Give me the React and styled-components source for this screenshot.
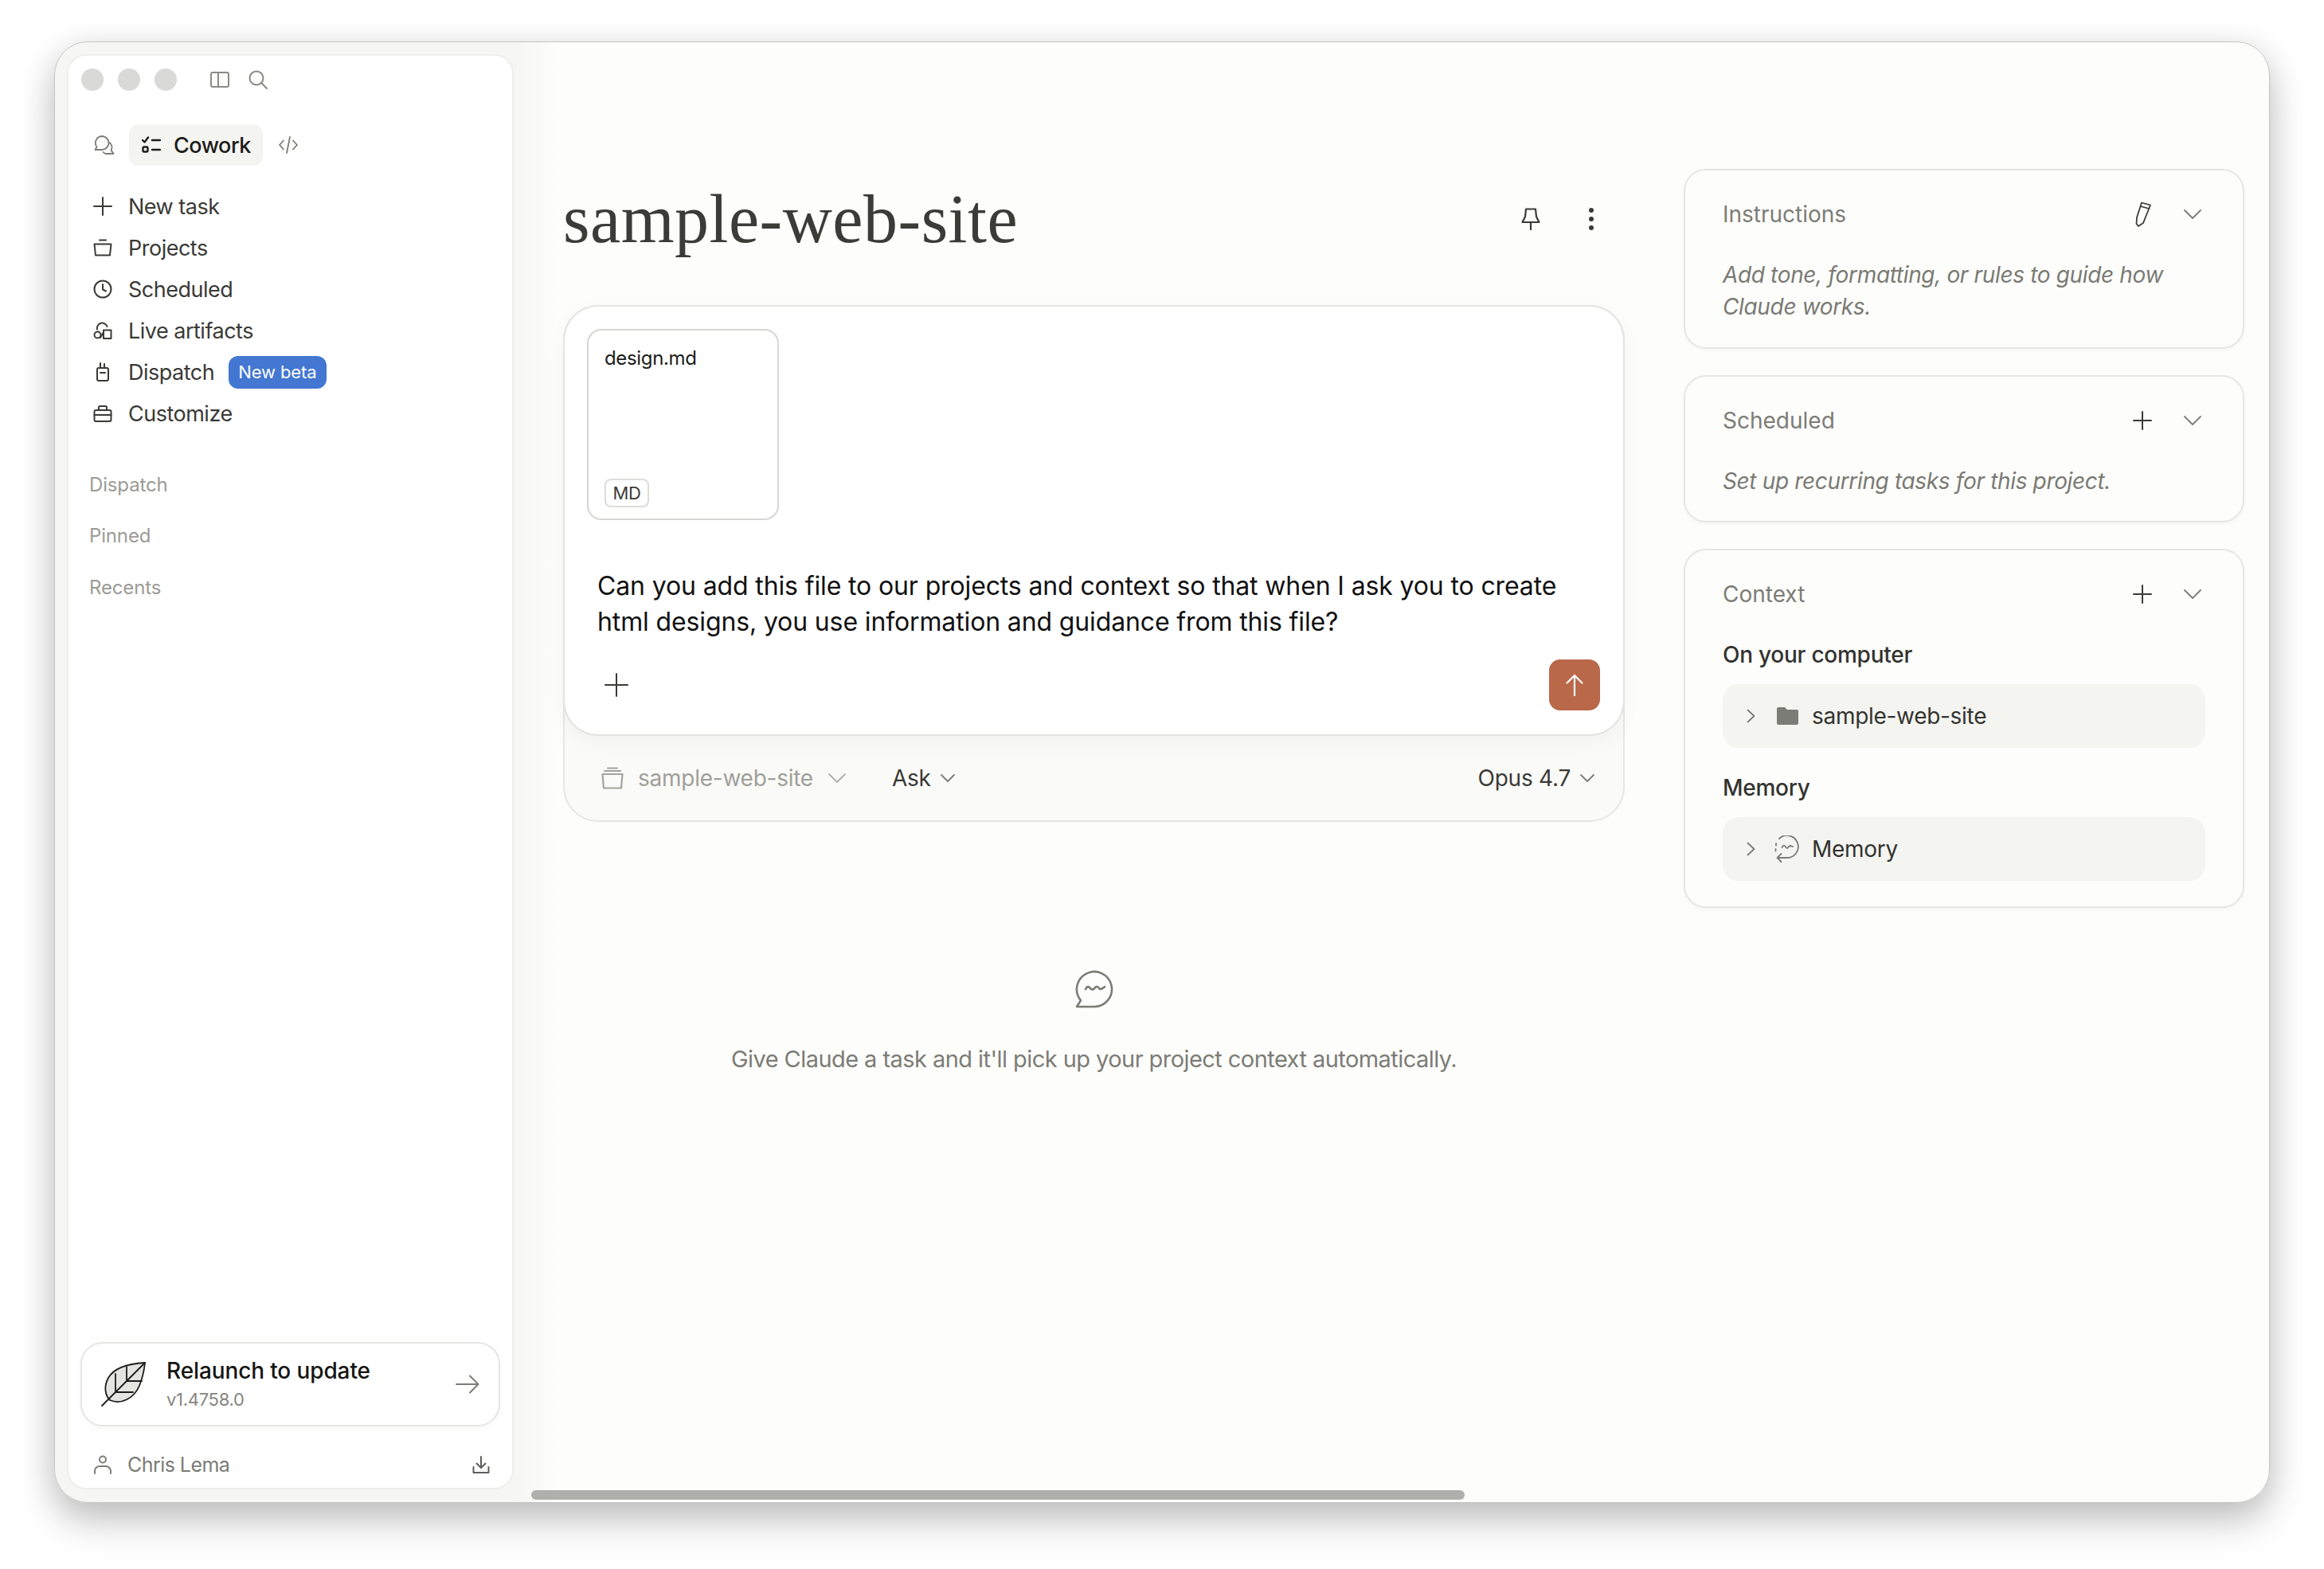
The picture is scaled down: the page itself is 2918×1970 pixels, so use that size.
import React from 'react';
import styled, { createGlobalStyle } from 'styled-components';

const Global = createGlobalStyle`
  html, body { margin: 0; padding: 0; background: #fff; }
  body { font-family: Inter, "Liberation Sans", sans-serif; -webkit-font-smoothing: antialiased; }
  * { box-sizing: border-box; }
`;

const Page = styled.div`
  width: 2918px;
  height: 1970px;
  padding: 52px 68px 83px;
  overflow: hidden;
`;

const Window = styled.div`
  position: relative;
  display: flex;
  height: 1835px;
  padding: 15px 32px 16px 15px;
  background: linear-gradient(90deg, #f6f6f4 0, #f6f6f4 578px, #fdfdfb 630px);
  border: 1px solid #c4c4c2;
  border-radius: 42px;
  box-shadow: 0 24px 48px rgba(0, 0, 0, 0.2), 0 6px 40px rgba(0, 0, 0, 0.1);
`;

const Sidebar = styled.aside`
  display: flex;
  flex-direction: column;
  flex: 0 0 561px;
  background: #fff;
  border: 2px solid #eeeeec;
  border-radius: 24px;
`;

const TitleBar = styled.div`
  display: flex;
  align-items: center;
  height: 60px;
  padding-left: 16px;
  color: #8b8b85;
`;

const Light = styled.span`
  width: 28px;
  height: 28px;
  margin-right: 18px;
  border-radius: 50%;
  background: #d9d9d7;
`;

const ModeTabs = styled.div`
  display: flex;
  align-items: center;
  height: 52px;
  margin: 26px 0 0 32px;
  color: #7c7c76;
`;

const ModePill = styled.div`
  display: flex;
  align-items: center;
  gap: 16px;
  width: 168px;
  height: 52px;
  margin: 0 20px 0 18px;
  padding-left: 16px;
  border-radius: 12px;
  background: #f4f4f1;
  color: #1c1c1a;
  font-size: 27px;
  font-weight: 500;
  letter-spacing: -0.5px;
`;

const Nav = styled.nav`
  margin-top: 25px;
`;

const NavRow = styled.div`
  display: flex;
  align-items: center;
  height: 52px;
  padding-left: 31px;
  color: #3a3a36;
  font-size: 27px;
  letter-spacing: -0.5px;
  svg { flex: 0 0 24px; margin-right: 20px; }
`;

const Badge = styled.span`
  display: flex;
  align-items: center;
  height: 41px;
  margin-left: 18px;
  padding: 0 12px;
  border-radius: 12px;
  background: #4377d1;
  color: #fff;
  font-size: 22px;
  letter-spacing: -0.1px;
`;

const Sections = styled.div`
  margin-top: 31px;
  flex: 1;
`;

const SectionLabel = styled.div`
  display: flex;
  align-items: center;
  height: 64.5px;
  padding-left: 26px;
  color: #9b9b95;
  font-size: 24px;
  letter-spacing: -0.15px;
`;

const UpdateCard = styled.div`
  display: flex;
  align-items: center;
  height: 106px;
  margin: 0 15px 19px;
  padding: 0 24px;
  background: #fff;
  border: 2px solid #e6e6e3;
  border-radius: 28px;
  box-shadow: 0 2px 6px rgba(0, 0, 0, 0.04);
  color: #7c7c76;
`;

const UpdateText = styled.div`
  flex: 1;
  margin-left: 26px;
`;

const UpdateTitle = styled.div`
  color: #161614;
  font-size: 28px;
  font-weight: 500;
  line-height: 38px;
  letter-spacing: -0.12px;
`;

const UpdateVersion = styled.div`
  color: #85857f;
  font-size: 22px;
  line-height: 34px;
  letter-spacing: -0.3px;
`;

const UserRow = styled.div`
  display: flex;
  align-items: center;
  height: 58px;
  padding: 0 28px 0 32px;
  color: #7c7c76;
  font-size: 25px;
  letter-spacing: -0.55px;
`;

const UserName = styled.span`
  flex: 1;
  margin-left: 20px;
`;

const Center = styled.main`
  display: flex;
  flex-direction: column;
  flex: 0 0 1333px;
  margin-left: 62px;
  padding-top: 157px;
`;

const HeaderRow = styled.div`
  display: flex;
  align-items: center;
  height: 100px;
  color: #3a3a36;
`;

const Title = styled.h1`
  flex: 1;
  margin: 0;
  font-family: "Liberation Serif", serif;
  font-size: 86px;
  font-weight: 400;
  letter-spacing: 0.5px;
  color: #3b3b37;
`;

const HeaderIcons = styled.div`
  display: flex;
  align-items: center;
  gap: 60px;
  margin-right: 38px;
`;

const Composer = styled.section`
  margin-top: 58px;
  height: 649px;
  background: #fafaf8;
  border: 2px solid #e6e6e3;
  border-radius: 44px;
`;

const ComposerCard = styled.div`
  display: flex;
  flex-direction: column;
  height: 541px;
  margin: -2px -2px 0;
  padding: 28px 29px 30px 28px;
  background: #fff;
  border: 2px solid #e3e3e0;
  border-top-color: #e6e6e3;
  border-radius: 44px;
  box-shadow: 0 8px 24px rgba(0, 0, 0, 0.035);
`;

const FileCard = styled.div`
  display: flex;
  flex-direction: column;
  justify-content: space-between;
  align-items: flex-start;
  width: 241px;
  height: 243px;
  padding: 20px 20px 14px;
  border: 2px solid #d6d6d3;
  border-radius: 18px;
  color: #1c1c1a;
  font-size: 24px;
  letter-spacing: -0.35px;
`;

const FileType = styled.span`
  display: flex;
  align-items: center;
  justify-content: center;
  width: 56px;
  height: 36px;
  border: 2px solid #dcdcd9;
  border-radius: 8px;
  color: #3a3a36;
  font-size: 22px;
`;

const Prompt = styled.p`
  margin: 60px 0 25px 13px;
  color: #111;
  font-size: 32px;
  line-height: 45px;
  letter-spacing: -0.13px;
`;

const ComposerTools = styled.div`
  display: flex;
  justify-content: space-between;
  align-items: center;
  padding-left: 22px;
  color: #3a3a36;
`;

const SendButton = styled.div`
  display: flex;
  align-items: center;
  justify-content: center;
  width: 64px;
  height: 64px;
  border-radius: 14px;
  background: #b9684a;
  color: #fff;
`;

const ComposerFooter = styled.div`
  display: flex;
  align-items: center;
  height: 106px;
  padding: 0 36px 0 46px;
  font-size: 28px;
  letter-spacing: -0.25px;
  color: #3a3a36;
`;

const Picker = styled.div`
  display: flex;
  align-items: center;
  gap: 12px;
  margin-right: ${p => p.$gap || 0}px;
  margin-left: ${p => (p.$end ? 'auto' : 0)};
  color: ${p => (p.$muted ? '#9f9f9a' : '#3a3a36')};
`;

const PickerIcon = styled.span`
  display: flex;
  margin-right: 6px;
`;

const PickerChevron = styled.span`
  display: flex;
  margin-left: ${p => (p.$muted ? 7 : 0)}px;
  color: ${p => (p.$muted ? '#b0b0ab' : '#7c7c76')};
`;

const EmptyState = styled.div`
  display: flex;
  flex-direction: column;
  align-items: center;
  margin-top: 186px;
  color: #7c7c76;
  font-size: 29px;
  letter-spacing: -0.56px;
`;

const EmptyText = styled.p`
  margin: 46px 0 0;
`;

const RightRail = styled.div`
  display: flex;
  flex-direction: column;
  gap: 33px;
  flex: 0 0 704px;
  margin-left: 74px;
  padding-top: 144px;
`;

const Panel = styled.section`
  padding: 0 47px;
  background: #fdfdfb;
  border: 2px solid #e6e6e3;
  border-radius: 28px;
  height: ${p => p.$h}px;
  box-shadow: 0 2px 5px rgba(0, 0, 0, 0.035);
`;

const PanelHeader = styled.div`
  display: flex;
  align-items: center;
  height: 110px;
  margin-bottom: 1px;
  color: #3a3a36;
`;

const PanelTitle = styled.div`
  flex: 1;
  color: #7c7c76;
  font-size: 28px;
`;

const PanelChevron = styled.span`
  display: flex;
  margin: 0 5px 0 40px;
  color: #7c7c76;
`;

const PanelHint = styled.p`
  margin: 0;
  color: #7a7a74;
  font-size: 28px;
  font-style: italic;
  line-height: 40px;
  letter-spacing: -0.35px;
`;

const SubHeading = styled.div`
  display: flex;
  align-items: center;
  height: 40px;
  margin-bottom: 17px;
  color: #33332f;
  font-size: 28px;
  font-weight: 500;
  letter-spacing: -0.25px;
`;

const ContextRow = styled.div`
  display: flex;
  align-items: center;
  height: 80px;
  margin-bottom: ${p => p.$mb || 0}px;
  padding-left: 30px;
  border-radius: 20px;
  background: #f4f4f1;
  color: #33332f;
  font-size: 28px;
  letter-spacing: -0.3px;
`;

const RowIcon = styled.span`
  display: flex;
  justify-content: center;
  width: 36px;
  margin: 0 13px 0 22px;
  color: #7c7c76;
`;

const Scrollbar = styled.div`
  position: absolute;
  left: 598px;
  bottom: 3px;
  width: 1172px;
  height: 12px;
  border-radius: 6px;
  background: #afafac;
`;

const Icon = ({ size = 24, sw = 2, children, fill = 'none', vb }) => (
  <svg width={size} height={size} viewBox={vb || `0 0 ${size} ${size}`} fill={fill} stroke="currentColor"
    strokeWidth={sw} strokeLinecap="round" strokeLinejoin="round">{children}</svg>
);

const Plus = ({ size = 24, sw = 2 }) => (
  <Icon size={size} sw={sw}><path d={`M${size / 2} 1V${size - 1}M1 ${size / 2}H${size - 1}`} /></Icon>
);

const Chevron = ({ w = 22, h = 12, sw = 1.8 }) => (
  <svg width={w} height={h} viewBox={`0 0 ${w} ${h}`} fill="none" stroke="currentColor" strokeWidth={sw} strokeLinecap="round" strokeLinejoin="round">
    <path d={`M1 1L${w / 2} ${h - 1}L${w - 1} 1`} />
  </svg>
);

const RowChevron = () => (
  <svg width="11" height="18" viewBox="0 0 11 18" fill="none" stroke="#7c7c76" strokeWidth="1.8" strokeLinecap="round" strokeLinejoin="round">
    <path d="M1.5 1.5L9.5 9L1.5 16.5" />
  </svg>
);

const TrayIcon = () => (
  <Icon><path d="M8 2.5H16" /><path d="M1.5 7.5H22.5L21 21.5H3Z" /></Icon>
);

const navItems = [
  { label: 'New task', icon: <Plus /> },
  { label: 'Projects', icon: <TrayIcon /> },
  { label: 'Scheduled', icon: <Icon><circle cx="12" cy="12" r="10.5" /><path d="M12 6V12.5L16 14.5" /></Icon> },
  { label: 'Live artifacts', icon: <Icon><circle cx="5.5" cy="17.5" r="4" /><path d="M5 10.5A6.5 6.5 0 0 1 17.5 7" /><path d="M13 22V11.5H22.5V22Z" /><path d="M9 21L13 14" /></Icon> },
  { label: 'Dispatch', badge: 'New beta', icon: <Icon><rect x="5" y="7" width="14" height="16" rx="2" /><path d="M9 7V1M14 7V2M9 13H15" /></Icon> },
  { label: 'Customize', icon: <Icon><rect x="1.5" y="8" width="21" height="14" rx="2" /><path d="M1.5 14H22.5M7 8V4.5A1.5 1.5 0 0 1 8.500 3H15.500A1.500 1.500 0 0 1 17 4.500V8" /></Icon> },
];

const MessageIcon = () => (
  <svg width="48" height="48" viewBox="0 0 48 48" fill="none" stroke="currentColor" strokeWidth="2.6" strokeLinecap="round" strokeLinejoin="round">
    <path d="M2 46H24A22 22 0 1 0 7 38Z" />
    <path d="M13 24C15 20 17 20 19 23C21 25 23 25 25 22C27 20 29 21 30 23C32 25 34 24 37 21" />
  </svg>
);

const App = () => (
  <Page>
    <Global />
    <Window>
      <Sidebar>
        <TitleBar>
          <Light /><Light /><Light />
          <svg width="24" height="20" viewBox="0 0 24 20" fill="none" stroke="currentColor" strokeWidth="2" style={{ marginLeft: 24 }}>
            <rect x="1" y="1" width="22" height="18" rx="2" /><path d="M10 1V19" />
          </svg>
          <svg width="24" height="24" viewBox="0 0 24 24" fill="none" stroke="currentColor" strokeWidth="2" strokeLinecap="round" style={{ marginLeft: 24 }}>
            <circle cx="10" cy="10" r="8.500" /><path d="M16.500 16.500L23 23" />
          </svg>
        </TitleBar>
        <ModeTabs>
          <svg width="26" height="24" viewBox="0 0 26 24" fill="none" stroke="currentColor" strokeWidth="1.8" strokeLinecap="round" strokeLinejoin="round">
            <path d="M10 1A8.500 8.500 0 0 1 10 18H1.500L3.500 14.500A8.500 8.500 0 0 1 10 1Z" />
            <path d="M19.500 9A7 7 0 0 1 21.500 18.500L24.500 23H14.500A7 7 0 0 1 11.500 21" />
          </svg>
          <ModePill>
            <svg width="24" height="22" viewBox="0 0 24 22" fill="none" stroke="#1c1c1a" strokeWidth="2.400" strokeLinecap="round" strokeLinejoin="round">
              <path d="M1 5L3.500 7.500L8 1.500M13 5H23M13 17H23" /><rect x="1.500" y="13.500" width="6" height="6" rx="1.500" />
            </svg>
            Cowork
          </ModePill>
          <svg width="24" height="24" viewBox="0 0 24 24" fill="none" stroke="currentColor" strokeWidth="1.800" strokeLinecap="round" strokeLinejoin="round">
            <path d="M6 6.500L1 12L6 17.500M18 6.500L23 12L18 17.500M14 2L10 22" />
          </svg>
        </ModeTabs>
        <Nav>
          {navItems.map(item => (
            <NavRow key={item.label}>
              {item.icon}
              {item.label}
              {item.badge && <Badge>{item.badge}</Badge>}
            </NavRow>
          ))}
        </Nav>
        <Sections>
          <SectionLabel>Dispatch</SectionLabel>
          <SectionLabel>Pinned</SectionLabel>
          <SectionLabel>Recents</SectionLabel>
        </Sections>
        <UpdateCard>
          <svg width="56" height="56" viewBox="0 0 56 56" fill="none" stroke="#1c1c1a" strokeWidth="1.800" strokeLinecap="round" strokeLinejoin="round">
            <path d="M55 1C38 2 17 6 9 20C3 31 5 42 11 48C25 54 41 46 48 30C52 20 54 11 55 1Z" fill="#e4e4e0" />
            <path d="M55 1L1 55M18 38V15M32 24V6M18 38H40M32 24H51" />
          </svg>
          <UpdateText>
            <UpdateTitle>Relaunch to update</UpdateTitle>
            <UpdateVersion>v1.4758.0</UpdateVersion>
          </UpdateText>
          <svg width="30" height="24" viewBox="0 0 30 24" fill="none" stroke="currentColor" strokeWidth="2" strokeLinecap="round" strokeLinejoin="round">
            <path d="M1 12H28M18 1.500L28.500 12L18 22.500" />
          </svg>
        </UpdateCard>
        <UserRow>
          <svg width="22" height="24" viewBox="0 0 22 24" fill="none" stroke="currentColor" strokeWidth="2" strokeLinecap="round">
            <circle cx="11" cy="5.500" r="4" /><path d="M1 23V20A6 6 0 0 1 7 14H15A6 6 0 0 1 21 20V23" />
          </svg>
          <UserName>Chris Lema</UserName>
          <svg width="22" height="22" viewBox="0 0 22 22" fill="none" stroke="#5e5e5a" strokeWidth="2" strokeLinecap="round" strokeLinejoin="round">
            <path d="M11 1V14.500M5.500 9.500L11 15L16.500 9.500M1.500 14V21H20.500V14" />
          </svg>
        </UserRow>
      </Sidebar>

      <Center>
        <HeaderRow>
          <Title>sample-web-site</Title>
          <HeaderIcons>
            <svg width="24" height="28" viewBox="0 0 24 28" fill="none" stroke="currentColor" strokeWidth="2.200" strokeLinecap="round" strokeLinejoin="round">
              <path d="M6 1.500H18L19 11L22.500 18H1.500L5 11ZM12 18V27" />
            </svg>
            <svg width="8" height="28" viewBox="0 0 8 28" fill="currentColor">
              <circle cx="4" cy="3" r="3" /><circle cx="4" cy="14" r="3" /><circle cx="4" cy="25" r="3" />
            </svg>
          </HeaderIcons>
        </HeaderRow>
        <Composer>
          <ComposerCard>
            <FileCard>
              design.md
              <FileType>MD</FileType>
            </FileCard>
            <Prompt>Can you add this file to our projects and context so that when I ask you to create html designs, you use information and guidance from this file?</Prompt>
            <ComposerTools>
              <Plus size={30} />
              <SendButton>
                <svg width="24" height="28" viewBox="0 0 24 28" fill="none" stroke="currentColor" strokeWidth="2.200" strokeLinecap="round" strokeLinejoin="round">
                  <path d="M12 27V2M2.500 11.500L12 2L21.500 11.500" />
                </svg>
              </SendButton>
            </ComposerTools>
          </ComposerCard>
          <ComposerFooter>
            <Picker $muted $gap={58}>
              <PickerIcon>
                <svg width="28" height="28" viewBox="0 0 28 28" fill="none" stroke="#a3a39e" strokeWidth="2.200" strokeLinecap="round" strokeLinejoin="round">
                  <path d="M8 1.500H20M4 5H24" /><path d="M1.500 9H26.500L25 26.500H3Z" />
                </svg>
              </PickerIcon>
              sample-web-site
              <PickerChevron $muted><Chevron /></PickerChevron>
            </Picker>
            <Picker>Ask <PickerChevron><Chevron w={18} h={10} /></PickerChevron></Picker>
            <Picker $end>Opus 4.7 <PickerChevron><Chevron w={18} h={10} /></PickerChevron></Picker>
          </ComposerFooter>
        </Composer>
        <EmptyState>
          <MessageIcon />
          <EmptyText>Give Claude a task and it'll pick up your project context automatically.</EmptyText>
        </EmptyState>
      </Center>

      <RightRail>
        <Panel $h={226}>
          <PanelHeader>
            <PanelTitle>Instructions</PanelTitle>
            <svg width="22" height="32" viewBox="0 0 22 32" fill="none" stroke="currentColor" strokeWidth="1.800" strokeLinecap="round" strokeLinejoin="round">
              <path d="M9 1.500L20 4.500L11 27L5 31L2.500 28L3 20ZM7.500 6L18.500 9" />
            </svg>
            <PanelChevron><Chevron /></PanelChevron>
          </PanelHeader>
          <PanelHint>Add tone, formatting, or rules to guide how Claude works.</PanelHint>
        </Panel>
        <Panel $h={185}>
          <PanelHeader>
            <PanelTitle>Scheduled</PanelTitle>
            <Plus />
            <PanelChevron><Chevron /></PanelChevron>
          </PanelHeader>
          <PanelHint>Set up recurring tasks for this project.</PanelHint>
        </Panel>
        <Panel $h={451}>
          <PanelHeader>
            <PanelTitle>Context</PanelTitle>
            <Plus />
            <PanelChevron><Chevron /></PanelChevron>
          </PanelHeader>
          <SubHeading>On your computer</SubHeading>
          <ContextRow $mb={30}>
            <RowChevron />
            <RowIcon>
              <svg width="27" height="22" viewBox="0 0 27 22" fill="#7c7c76">
                <path d="M0 2A2 2 0 0 1 2 0H10L13 3H25A2 2 0 0 1 27 5V20A2 2 0 0 1 25 22H2A2 2 0 0 1 0 20Z" />
              </svg>
            </RowIcon>
            sample-web-site
          </ContextRow>
          <SubHeading>Memory</SubHeading>
          <ContextRow>
            <RowChevron />
            <RowIcon>
              <svg width="32" height="34" viewBox="0 0 32 34" fill="none" stroke="currentColor" strokeWidth="1.800" strokeLinecap="round" strokeLinejoin="round">
                <path d="M6 4A14 14 0 1 1 16 28H4M8.500 23L3.500 28L8.500 33M2 10V12.500M1.500 17V19.500" />
                <path d="M9.500 15C11 12 12.500 12 14 14.500C15.500 16.500 17 16 18 14C19.500 12 21 13 23 14" />
              </svg>
            </RowIcon>
            Memory
          </ContextRow>
        </Panel>
      </RightRail>
      <Scrollbar />
    </Window>
  </Page>
);

export default App;
